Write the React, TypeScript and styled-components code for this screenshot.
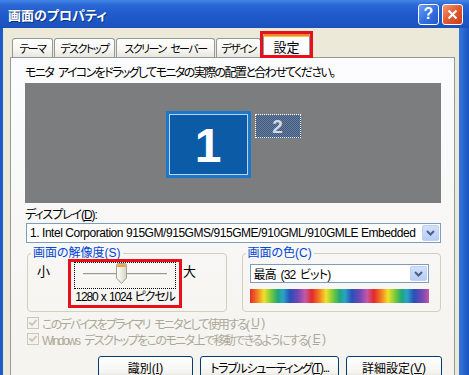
import React from "react";
import styled, { createGlobalStyle, css } from "styled-components";

const GlobalStyle = createGlobalStyle`
  html, body { margin: 0; padding: 0; background: #1a58c6; }
  body {
    font-family: "Liberation Sans", "Noto Sans CJK JP", sans-serif;
    font-size: 12px;
    font-feature-settings: "palt";
    color: #000;
  }
  * { box-sizing: border-box; }
`;

const Window = styled.div`
  width: 469px;
  height: 375px;
  overflow: hidden;
  display: flex;
  flex-direction: column;
  background: linear-gradient(90deg, #1d5bc8 0, #1a57c2 96%, #3374da 98%, #1a55c0 100%);
`;

const TitleBar = styled.div`
  height: 28px;
  flex: none;
  display: flex;
  align-items: center;
  padding: 0 6px 0 8px;
  background: linear-gradient(180deg, #4585e6 0%, #2a67d4 18%, #1f5bcb 50%, #1b55c2 85%, #1a50b8 100%);
`;

const Title = styled.div`
  flex: 1;
  color: #fff;
  font-weight: bold;
  font-size: 13px;
  text-shadow: 1px 1px 0 #0d2f7a;
`;

const CaptionButton = styled.div<{ $kind: "help" | "close" }>`
  width: 21px;
  height: 21px;
  margin-left: 3px;
  border: 1px solid #fff;
  border-radius: 3px;
  display: flex;
  align-items: center;
  justify-content: center;
  color: #fff;
  font: bold 16px "Liberation Sans", sans-serif;
  background: ${(p) =>
    p.$kind === "close"
      ? "linear-gradient(135deg, #f39a74 0%, #e2582f 50%, #c9401c 100%)"
      : "linear-gradient(135deg, #6fa0f5 0%, #3573e2 50%, #2358c4 100%)"};
`;

const Client = styled.div`
  flex: 1;
  min-height: 0;
  margin: 0 10px 0 3px;
  padding: 0 4px 0 7px;
  background: #ece9d8;
  display: flex;
  flex-direction: column;
`;

const TabStrip = styled.div`
  height: 29px;
  flex: none;
  display: flex;
  align-items: flex-end;
  gap: 1px;
  padding-left: 2px;
  position: relative;
  z-index: 1;
`;

const Tab = styled.div<{ $w: number; $active?: boolean }>`
  width: ${(p) => p.$w}px;
  height: 19px;
  display: flex;
  align-items: center;
  justify-content: center;
  white-space: nowrap;
  font-size: 11px;
  letter-spacing: -1.5px;
  word-spacing: 3px;
  border: 1px solid #919b9c;
  border-bottom: none;
  border-radius: 3px 3px 0 0;
  background: linear-gradient(180deg, #ffffff 0%, #f6f5f1 60%, #e8e6dd 100%);
  ${(p) =>
    p.$active &&
    css`
      height: 25px;
      margin: 0 0 -1px 1px;
      padding-bottom: 2px;
      letter-spacing: 0;
      font-size: 13px;
      background: #fcfcfe;
      border-top: 3px solid #e68b2c;
      box-shadow: inset 0 1px 0 #ffc73c;
      position: relative;
      &::after {
        content: "";
        position: absolute;
        top: -5px;
        left: -4px;
        right: -4px;
        bottom: 0;
        border: 3px solid #e8101a;
      }
    `}
`;

const Panel = styled.div`
  flex: 1;
  border: 1px solid #919b9c;
  background: linear-gradient(180deg, #fcfcfe 0%, #f4f3ee 100%);
  padding: 8px 13px 0 14px;
  display: flex;
  flex-direction: column;
`;

const Line = styled.div<{ $mt?: number; $ls?: number }>`
  line-height: 14px;
  height: 14px;
  white-space: nowrap;
  margin-top: ${(p) => p.$mt ?? 0}px;
  letter-spacing: ${(p) => p.$ls ?? 0}px;
  word-spacing: 3px;
`;

const MonitorArea = styled.div`
  margin-top: 3px;
  height: 120px;
  flex: none;
  background: #7b7d7e;
  display: flex;
  align-items: center;
  justify-content: center;
  padding-top: 3px;
`;

const Monitors = styled.div`
  display: flex;
  align-items: flex-start;
  gap: 4px;
`;

const PrimaryMonitor = styled.div`
  width: 85px;
  height: 67px;
  border: 3px solid #1d78cc;
  box-shadow: inset 0 0 0 1px #b9d4ef;
  background: #0b5ba6;
  display: flex;
  align-items: center;
  justify-content: center;
  color: #fff;
  font: bold 48px/1 "Liberation Sans", sans-serif;
  padding-top: 2px;
`;

const SecondaryMonitor = styled.div`
  width: 46px;
  height: 24px;
  margin-top: 3px;
  border: 1px dotted #ffffff;
  background: repeating-conic-gradient(#2a5a9c 0 25%, #7b7d7e 0 50%) 0 0 / 2px 2px;
  display: flex;
  align-items: center;
  justify-content: center;
  color: #d3d9e6;
  font: bold 19px/1 "Liberation Sans", sans-serif;
`;

const Select = styled.div<{ $w?: number; $h: number; $mt?: number; $ml?: number }>`
  ${(p) => (p.$w ? `width: ${p.$w}px;` : "")}
  height: ${(p) => p.$h}px;
  margin-top: ${(p) => p.$mt ?? 0}px;
  margin-left: ${(p) => p.$ml ?? 0}px;
  flex: none;
  border: 1px solid #7f9db9;
  background: #fff;
  display: flex;
  align-items: center;
  padding: 1px 1px 1px 3px;
`;

const SelectText = styled.span<{ $ls: number; $ws: number }>`
  flex: 1;
  white-space: nowrap;
  overflow: hidden;
  letter-spacing: ${(p) => p.$ls}px;
  word-spacing: ${(p) => p.$ws}px;
`;

const SelectArrow = styled.div`
  width: 17px;
  height: 100%;
  flex: none;
  border-radius: 2px;
  background: linear-gradient(180deg, #d2e0fc 0%, #b7cdf6 100%);
  border: 1px solid #bdd0f5;
  display: flex;
  align-items: center;
  justify-content: center;
`;

const GroupRow = styled.div`
  display: flex;
  gap: 15px;
  margin: 3px 0 0 2px;
`;

const Group = styled.fieldset`
  width: 200px;
  margin: 0;
  min-width: 0;
  border: 1px solid #d0d0bf;
  border-radius: 4px;
  padding: 0 0 3px 9px;
`;

const Legend = styled.legend`
  margin-left: -6px;
  padding: 0 2px;
  line-height: 14px;
  color: #0046d5;
`;

const ResolutionRow = styled.div`
  display: flex;
  align-items: flex-start;
  margin-top: -1px;
`;

const SizeLabel = styled.span<{ $ml: number }>`
  margin-top: 6px;
  margin-left: ${(p) => p.$ml}px;
  line-height: 14px;
  font-size: 13px;
`;

const Highlight = styled.div`
  width: 114px;
  height: 49px;
  margin-left: 18px;
  border: 3px solid #e8101a;
  padding: 0 3px;
`;

const SliderBox = styled.div`
  height: 27px;
  border: 1px dotted #000;
  position: relative;
  padding: 10px 8px 0;
`;

const Track = styled.div`
  height: 3px;
  border-top: 1px solid #9d9c99;
  border-bottom: 1px solid #ffffff;
  background: #e4e2d8;
`;

const Thumb = styled.svg`
  position: absolute;
  left: 40px;
  top: -1px;
`;

const PixelLabel = styled.div`
  line-height: 16px;
  text-align: center;
  white-space: nowrap;
  letter-spacing: -1.1px;
  word-spacing: 1px;
`;

const Rainbow = styled.div`
  width: 179px;
  height: 14px;
  margin: 6px 0 0 -2px;
  background: repeating-linear-gradient(
    90deg,
    #e42a2a 0px,
    #f27a22 7px,
    #f2e02a 14px,
    #7acb3a 21px,
    #1fa67a 28px,
    #2aa4c8 33px,
    #2b4fb8 40px,
    #7048b4 48px,
    #c458a8 55px,
    #e42a2a 62px
  );
`;

const CheckRow = styled.div<{ $mt: number; $ls: number }>`
  display: flex;
  align-items: center;
  gap: 3px;
  margin: ${(p) => p.$mt}px 0 0 2px;
  height: 14px;
  color: #aca899;
  white-space: nowrap;
  letter-spacing: ${(p) => p.$ls}px;
  word-spacing: 3px;
`;

const CheckBox = styled.div`
  width: 12px;
  height: 12px;
  flex: none;
  border: 1px solid #cac8bb;
  background: #f4f3ee;
  display: flex;
  align-items: center;
  justify-content: center;
`;

const ButtonRow = styled.div`
  display: flex;
  justify-content: flex-end;
  gap: 7px;
  margin: 10px -1px 0 0;
`;

const Button = styled.div<{ $w: number; $ls?: number }>`
  width: ${(p) => p.$w}px;
  height: 23px;
  border: 1px solid #003c74;
  border-radius: 3px;
  background: linear-gradient(180deg, #ffffff 0%, #f3f3ef 75%, #dcd7cb 100%);
  display: flex;
  align-items: center;
  justify-content: center;
  white-space: nowrap;
  letter-spacing: ${(p) => p.$ls ?? 0}px;
`;

const Chevron = () => (
  <svg width="9" height="6" viewBox="0 0 9 6">
    <path d="M1 1 L4.5 4.5 L8 1" fill="none" stroke="#4d6185" strokeWidth="2" />
  </svg>
);

const Check = () => (
  <svg width="10" height="10" viewBox="0 0 10 10">
    <path d="M1.5 4.5 L4 7 L8.5 2" fill="none" stroke="#c6c4b6" strokeWidth="1.8" />
  </svg>
);

export default function App() {
  return (
    <>
      <GlobalStyle />
      <Window>
        <TitleBar>
          <Title>画面のプロパティ</Title>
          <CaptionButton $kind="help">?</CaptionButton>
          <CaptionButton $kind="close">
            <svg width="11" height="11" viewBox="0 0 11 11">
              <path d="M1.5 1.5 L9.5 9.5 M9.5 1.5 L1.5 9.5" stroke="#fff" strokeWidth="2.2" />
            </svg>
          </CaptionButton>
        </TitleBar>
        <Client>
          <TabStrip>
            <Tab $w={41}>テーマ</Tab>
            <Tab $w={61}>デスクトップ</Tab>
            <Tab $w={99}>スクリーン セーバー</Tab>
            <Tab $w={45}>デザイン</Tab>
            <Tab $w={47} $active>設定</Tab>
          </TabStrip>
          <Panel>
            <Line $ls={-1.6}>モニタ アイコンをドラッグしてモニタの実際の配置と合わせてください。</Line>
            <MonitorArea>
              <Monitors>
                <PrimaryMonitor>1</PrimaryMonitor>
                <SecondaryMonitor>2</SecondaryMonitor>
              </Monitors>
            </MonitorArea>
            <Line $mt={5} $ls={-1.1}>
              ディスプレイ(<u>D</u>):
            </Line>
            <Select $h={20} $mt={1} $ml={1}>
              <SelectText $ls={-0.45} $ws={0}>
                1. Intel Corporation 915GM/915GMS/915GME/910GML/910GMLE Embedded
              </SelectText>
              <SelectArrow>
                <Chevron />
              </SelectArrow>
            </Select>
            <GroupRow>
              <Group>
                <Legend>画面の解像度(S)</Legend>
                <ResolutionRow>
                  <SizeLabel $ml={0}>小</SizeLabel>
                  <Highlight>
                    <SliderBox>
                      <Track />
                      <Thumb width="13" height="23" viewBox="0 0 13 23">
                        <defs>
                          <linearGradient id="thumbFill" x1="0" x2="1" y1="0" y2="0">
                            <stop offset="0" stopColor="#ffffff" />
                            <stop offset="1" stopColor="#d6d3c6" />
                          </linearGradient>
                        </defs>
                        <path
                          d="M1.5 3.5 Q1.5 1.5 3.5 1.5 H9.5 Q11.5 1.5 11.5 3.5 V16 L6.5 21.5 L1.5 16 Z"
                          fill="url(#thumbFill)"
                          stroke="#a29f8c"
                        />
                        <path d="M2.2 3.2 Q2.2 2.2 3.5 2.2 H9.5 Q10.8 2.2 10.8 3.2 V5 H2.2 Z" fill="#f0a23a" />
                      </Thumb>
                    </SliderBox>
                    <PixelLabel>1280 x 1024 ピクセル</PixelLabel>
                  </Highlight>
                  <SizeLabel $ml={1}>大</SizeLabel>
                </ResolutionRow>
              </Group>
              <Group>
                <Legend>画面の色(C)</Legend>
                <Select $w={179} $h={19} $mt={4} $ml={-2}>
                  <SelectText $ls={-0.8} $ws={2}>
                    最高 (32 ビット)
                  </SelectText>
                  <SelectArrow>
                    <Chevron />
                  </SelectArrow>
                </Select>
                <Rainbow />
              </Group>
            </GroupRow>
            <CheckRow $mt={4} $ls={-1.8}>
              <CheckBox>
                <Check />
              </CheckBox>
              このデバイスをプライマリ モニタとして使用する(<u>U</u>)
            </CheckRow>
            <CheckRow $mt={2} $ls={-1.6}>
              <CheckBox>
                <Check />
              </CheckBox>
              Windows デスクトップをこのモニタ上で移動できるようにする(<u>E</u>)
            </CheckRow>
            <ButtonRow>
              <Button $w={95}>
                識別(<u>I</u>)
              </Button>
              <Button $w={139} $ls={-1.3}>
                トラブルシューティング(<u>T</u>)...
              </Button>
              <Button $w={96}>
                詳細設定(<u>V</u>)
              </Button>
            </ButtonRow>
          </Panel>
        </Client>
      </Window>
    </>
  );
}
